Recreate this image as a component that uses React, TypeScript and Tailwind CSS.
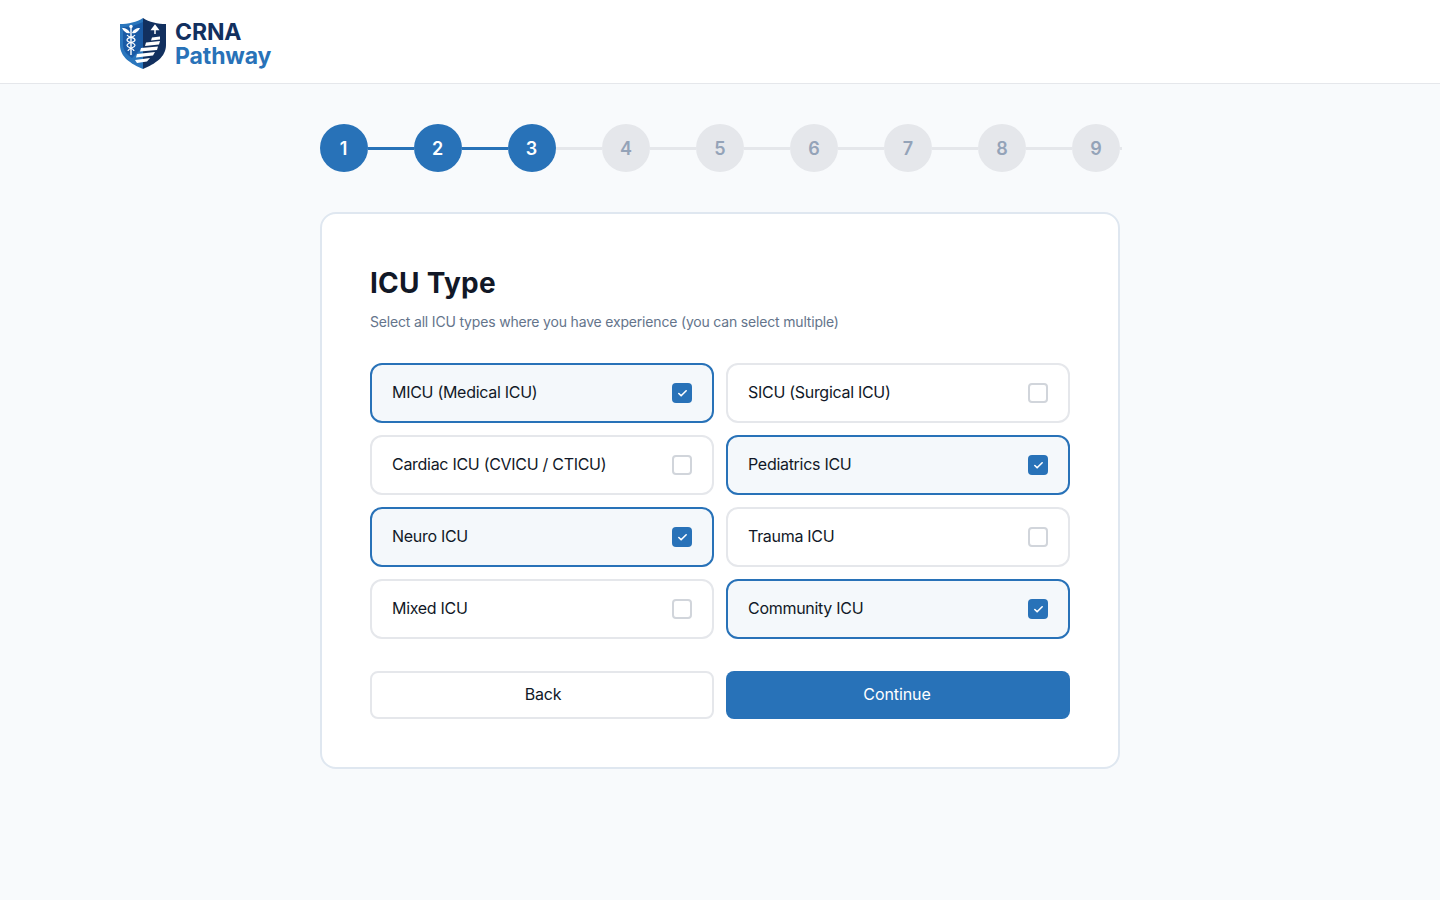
import { Check } from "lucide-react"

const options = [
  { label: "MICU (Medical ICU)", checked: true },
  { label: "SICU (Surgical ICU)", checked: false },
  { label: "Cardiac ICU (CVICU / CTICU)", checked: false },
  { label: "Pediatrics ICU", checked: true },
  { label: "Neuro ICU", checked: true },
  { label: "Trauma ICU", checked: false },
  { label: "Mixed ICU", checked: false },
  { label: "Community ICU", checked: true },
]

const steps = [1, 2, 3, 4, 5, 6, 7, 8, 9]

function Logo() {
  return (
    <svg width="48" height="52" viewBox="0 0 48 52" fill="none">
      <path d="M24 1 C18 5 9 7 1 7 L1 28 C1 40 12 47 24 52 Z" fill="#2a76bd" />
      <path d="M24 1 C30 5 39 7 47 7 L47 28 C47 40 36 47 24 52 Z" fill="#12305f" />
      <path d="M4 10 C11 10 18 8 24 5 L24 30 L13 41 C7 37 4 33 4 27 Z" fill="#1a5ba6" />
      <path d="M12 9 V38" stroke="#fff" strokeWidth="1.4" />
      <circle cx="12" cy="9.5" r="1.7" fill="#fff" />
      <path d="M3 11 C7 11 10 13 11 16 C8 17 5 15 3 11 Z M21 11 C17 11 14 13 13 16 C16 17 19 15 21 11 Z" fill="#fff" />
      <path d="M8 18 C10 21 16 20 16 23 C16 26 8 25 8 28.5 C8 31 15 31 15 34 M16 18 C14 21 8 20 8 23 C8 26 16 25 16 28.5 C16 31 9 31 9 34" stroke="#fff" strokeWidth="1.2" />
      <path d="M33 20.5 L41 19.5 L41 22.5 L32 23.5 Z M27 25.5 L41 24 L40 27.5 L26 29 Z M22 31 L39 29.5 L38 33 L21 34.5 Z M18 37 L36 35 L34 38.5 L17 40.5 Z M16 43 L31 41 L28 44.5 L18 46 Z" fill="#fff" />
      <path d="M36 17 V11 M33 12.5 L36 8.5 L39 12.5 Z" stroke="#fff" strokeWidth="1.5" fill="#fff" />
    </svg>
  )
}

export default function App() {
  return (
    <div className="min-h-screen bg-[#f8fafc] font-['Inter',sans-serif]">
      <header className="h-[84px] bg-white border-b border-[#e5e7eb] flex items-center px-[119px]">
        <div className="flex items-center gap-2">
          <div className="mt-[3px]">
            <Logo />
          </div>
          <div className="flex flex-col font-bold text-[23px] leading-[24px] tracking-[-0.1px] mt-[4px]">
            <span className="text-[#12305f]">CRNA</span>
            <span className="text-[#2872b8]">Pathway</span>
          </div>
        </div>
      </header>

      <main className="w-[800px] mx-auto pt-10">
        <div className="flex items-center mb-10">
          {steps.map((n) => (
            <div key={n} className="flex items-center">
              <div
                className={
                  n <= 3
                    ? "w-12 h-12 pt-0.5 pr-px rounded-full bg-[#2872b8] text-white flex items-center justify-center text-lg font-semibold"
                    : "w-12 h-12 pt-0.5 rounded-full bg-[#e5e7eb] text-[#94a3b8] flex items-center justify-center text-lg font-semibold"
                }
              >
                {n}
              </div>
              {n < 9 ? (
                <div className={n < 3 ? "w-[46px] h-[3px] bg-[#2872b8]" : "w-[46px] h-[3px] bg-[#e5e7eb]"} />
              ) : (
                <div className="w-[2px] h-[3px] shrink-0 bg-[#e5e7eb]" />
              )}
            </div>
          ))}
        </div>

        <div className="bg-white border-2 border-[#dfe7f0] rounded-2xl p-12">
          <h1 className="text-[28px] leading-[42px] font-bold text-[#111827] tracking-[0.25px]">ICU Type</h1>
          <p className="text-sm leading-[21px] text-[#64748b] tracking-[-0.18px] mt-[7px] mb-[31px]">Select all ICU types where you have experience (you can select multiple)</p>

          <div className="grid grid-cols-2 gap-3">
            {options.map((o) => (
              <div
                key={o.label}
                className={
                  o.checked
                    ? "h-[60px] px-5 rounded-xl border-2 border-[#2872b8] bg-[#f4f8fb] flex items-center justify-between"
                    : "h-[60px] px-5 rounded-xl border-2 border-[#e5e7eb] bg-white flex items-center justify-between"
                }
              >
                <span className="text-base text-[#111827] tracking-[-0.29px] -mt-0.5">{o.label}</span>
                {o.checked ? (
                  <span className="w-5 h-5 rounded bg-[#2872b8] flex items-center justify-center">
                    <Check size={11} strokeWidth={3.5} className="text-white" />
                  </span>
                ) : (
                  <span className="w-5 h-5 rounded border-2 border-[#d1d5db] bg-white" />
                )}
              </div>
            ))}
          </div>

          <div className="grid grid-cols-2 gap-3 mt-8">
            <button type="button" className="h-12 pb-0.5 pl-0.5 rounded-lg border-2 border-[#e5e7eb] bg-white text-base text-[#111827] tracking-[-0.2px]">Back</button>
            <button type="button" className="h-12 pb-0.5 pr-0.5 rounded-lg bg-[#2872b8] text-base text-white tracking-[-0.1px]">Continue</button>
          </div>
        </div>
      </main>
    </div>
  )
}
